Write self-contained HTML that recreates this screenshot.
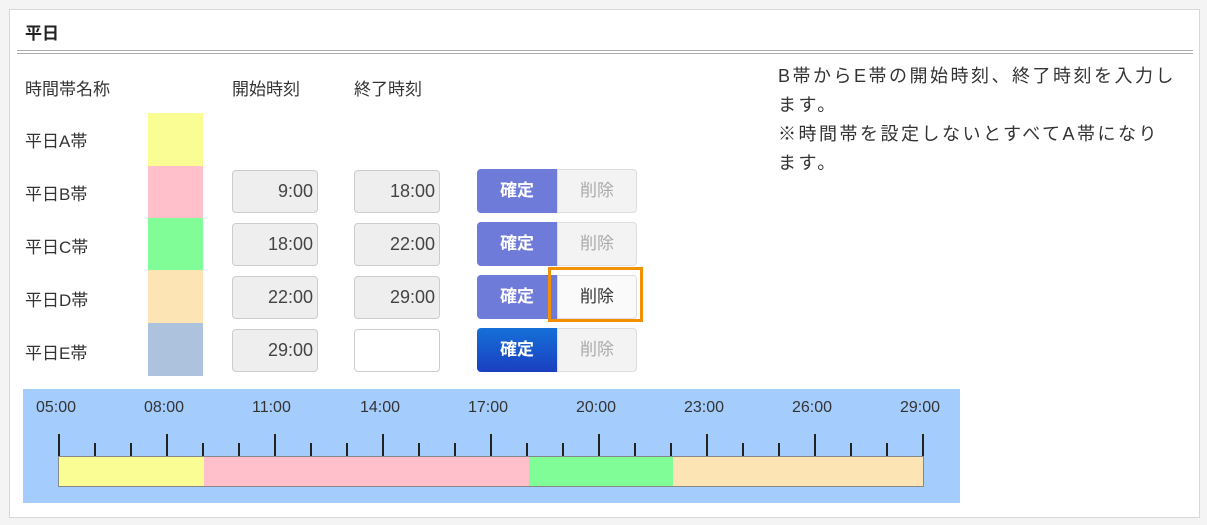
<!DOCTYPE html>
<html><head><meta charset="utf-8"><style>
body{margin:0;width:1207px;height:525px;background:#f4f4f4;font-family:"Liberation Sans","Noto Sans CJK JP",sans-serif;color:#333;position:relative;overflow:hidden}
.a{position:absolute}
.box{left:9px;top:9px;width:1189px;height:507px;background:#fff;border:1px solid #d8d8d8}
.t{font-size:17px}
.sw{left:148px;width:55px;height:53px}
.in{width:86px;height:43px;border:1px solid #ccc;border-radius:4px;background:#eee;box-sizing:border-box;text-align:right;padding-right:4px;line-height:41px;font-size:18px;color:#444}
.bc{width:80px;height:44px;border-radius:4px 0 0 4px;background:#6f7bd9;color:#fff;font-size:17px;text-align:center;line-height:44px;font-weight:bold}
.bd{width:80px;height:44px;border-radius:0 4px 4px 0;background:#f3f3f3;border:1px solid #ddd;box-sizing:border-box;color:#aaa;font-size:17px;text-align:center;line-height:42px}
.lb{font-size:16px;color:#333;top:399px}
</style></head><body>
<div class="a box"></div>
<div class="a" style="left:25px;top:19px;font-size:17px;font-weight:bold;color:#222">平日</div>
<div class="a" style="left:17px;top:50px;width:1176px;height:2px;border-top:1px solid #aaa;border-bottom:1px solid #aaa"></div>
<div class="a t" style="left:25px;top:75px">時間帯名称</div>
<div class="a t" style="left:232px;top:75px">開始時刻</div>
<div class="a t" style="left:354px;top:75px">終了時刻</div>
<div class="a" style="left:778px;top:62px;width:420px;line-height:29px;font-size:18px;letter-spacing:2.5px;white-space:nowrap">B帯からE帯の開始時刻、終了時刻を入力し<br>ます。<br>※時間帯を設定しないとすべてA帯になり<br>ます。</div>

<div class="a t" style="left:25px;top:127px">平日A帯</div>
<div class="a t" style="left:25px;top:180px">平日B帯</div>
<div class="a t" style="left:25px;top:233px">平日C帯</div>
<div class="a t" style="left:25px;top:286px">平日D帯</div>
<div class="a t" style="left:25px;top:339px">平日E帯</div>
<div class="a sw" style="top:113px;background:#fafd93"></div>
<div class="a sw" style="top:166px;background:#ffc0cb"></div>
<div class="a sw" style="top:218px;background:#80fd96"></div>
<div class="a sw" style="top:270px;background:#fde4b5"></div>
<div class="a sw" style="top:323px;background:#adc3dd"></div>

<div class="a in" style="left:232px;top:170px">9:00</div><div class="a in" style="left:354px;top:170px">18:00</div>
<div class="a in" style="left:232px;top:223px">18:00</div><div class="a in" style="left:354px;top:223px">22:00</div>
<div class="a in" style="left:232px;top:276px">22:00</div><div class="a in" style="left:354px;top:276px">29:00</div>
<div class="a in" style="left:232px;top:329px">29:00</div><div class="a in" style="left:354px;top:329px;background:#fff"></div>

<div class="a bc" style="left:477px;top:169px">確定</div><div class="a bd" style="left:557px;top:169px">削除</div>
<div class="a bc" style="left:477px;top:222px">確定</div><div class="a bd" style="left:557px;top:222px">削除</div>
<div class="a bc" style="left:477px;top:275px">確定</div><div class="a bd" style="left:557px;top:275px;background:#fafafa;color:#333">削除</div>
<div class="a bc" style="left:477px;top:328px;background:linear-gradient(#1570d8,#1a3fc0)">確定</div><div class="a bd" style="left:557px;top:328px">削除</div>
<div class="a" style="left:548px;top:267px;width:95px;height:55px;border:3px solid #f39000;box-sizing:border-box"></div>

<div class="a" style="left:23px;top:389px;width:937px;height:114px;background:#a4cdfd"></div>
<div class="a lb" style="left:36px">05:00</div><div class="a lb" style="left:144px">08:00</div><div class="a lb" style="left:252px">11:00</div><div class="a lb" style="left:360px">14:00</div><div class="a lb" style="left:468px">17:00</div><div class="a lb" style="left:576px">20:00</div><div class="a lb" style="left:684px">23:00</div><div class="a lb" style="left:792px">26:00</div><div class="a lb" style="left:900px">29:00</div>
<div class="a" style="left:58px;top:456px;width:866px;height:31px;border:1px solid #888;box-sizing:border-box;background:linear-gradient(90deg,#fafd93 0 145px,#ffc0cb 145px 470px,#80fd96 470px 614px,#fde4b5 614px)"></div>
<svg class="a" style="left:0;top:0" width="1207" height="525">
<g stroke="#222" stroke-width="2">
<path d="M59 434V456M167 434V456M275 434V456M383 434V456M491 434V456M599 434V456M707 434V456M815 434V456M923 434V456"/>
<path d="M95 443V456M131 443V456M203 443V456M239 443V456M311 443V456M347 443V456M419 443V456M455 443V456M527 443V456M563 443V456M635 443V456M671 443V456M743 443V456M779 443V456M851 443V456M887 443V456"/>
</g></svg>
</body></html>
